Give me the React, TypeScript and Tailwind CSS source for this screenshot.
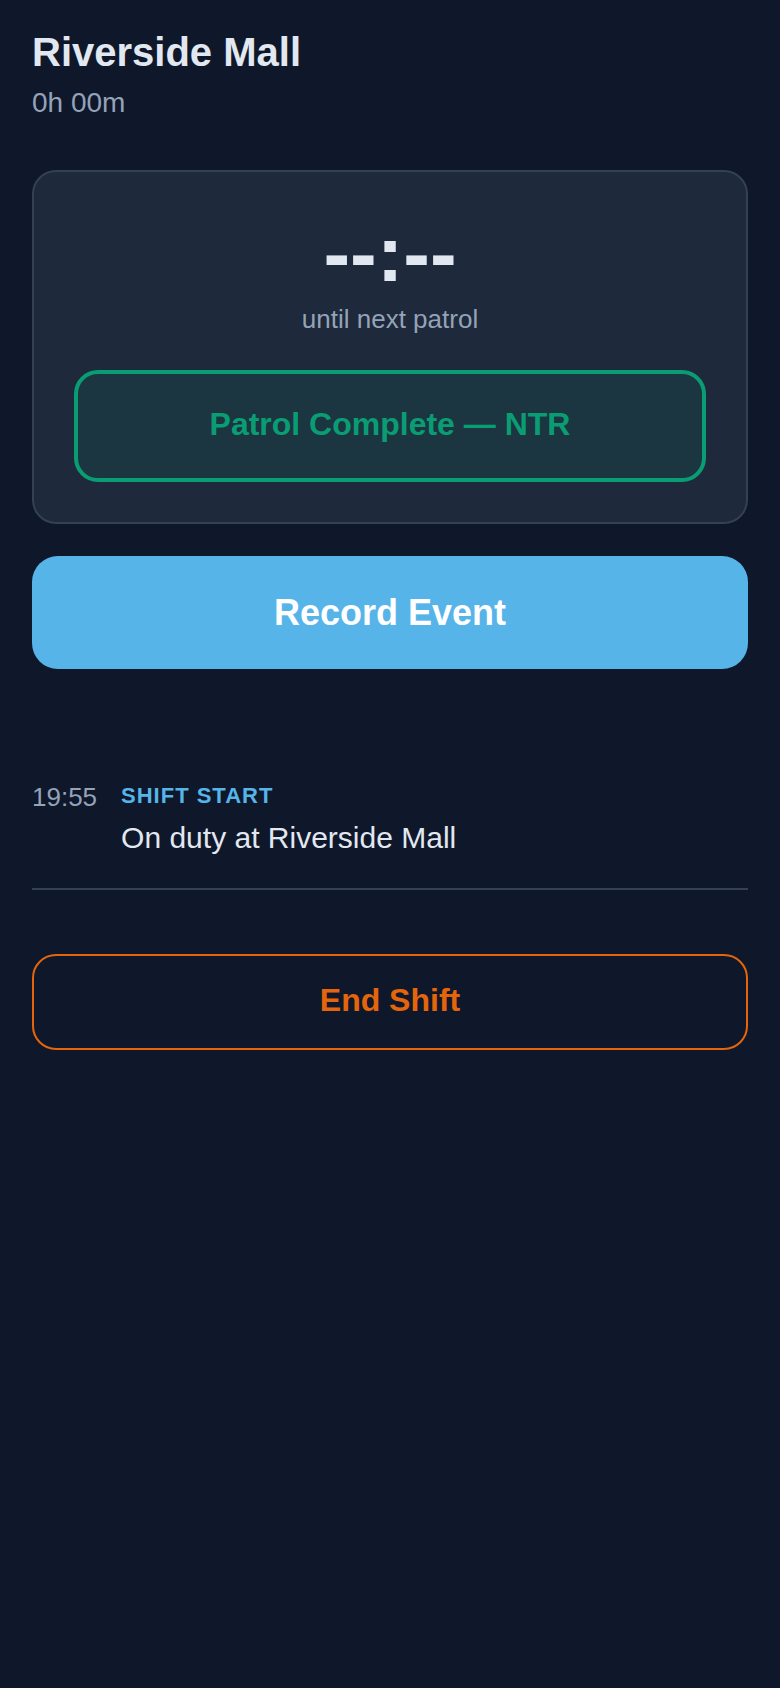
import React from "react";

export default function App() {
  return (
    <div
      className="min-h-[1688px] w-full bg-[#0f172a] px-8 pt-7"
      style={{ fontFamily: '"Liberation Sans", Arial, sans-serif' }}
    >
      <h1 className="text-[40px] font-bold leading-[48px] text-[#e2e8f0]">Riverside Mall</h1>
      <div className="mt-[9px] text-[28px] leading-[36px] text-[#94a3b8]">0h 00m</div>

      <div className="mt-[49px] rounded-[24px] border-2 border-[#334155] bg-[#1e293b] px-10 pt-10 pb-10">
        <div className="text-center text-[80px] font-bold leading-[84px] text-[#e2e8f0]">--:--</div>
        <div className="mt-[7px] text-center text-[26px] leading-[32px] text-[#94a3b8]">until next patrol</div>
        <button className="mt-[35px] flex h-[112px] w-full items-center justify-center rounded-[24px] border-4 border-[#0a9d73] bg-[#1b3641] pb-[4px] text-[32px] font-bold text-[#0a9d73]">
          Patrol Complete — NTR
        </button>
      </div>

      <button className="mt-8 flex h-[113px] w-full items-center justify-center rounded-[26px] bg-[#56b4e9] text-[36px] font-bold text-white">
        Record Event
      </button>

      <div className="mt-[110px] flex gap-6 border-b-2 border-[#334155] pb-[30px]">
        <div className="text-[26px] leading-[36px] text-[#94a3b8]">19:55</div>
        <div className="flex flex-col">
          <div className="text-[22px] font-bold leading-[34px] tracking-[0.045em] text-[#56b4e9]">SHIFT START</div>
          <div className="mt-[5px] text-[30px] leading-[40px] text-[#e2e8f0]">On duty at Riverside Mall</div>
        </div>
      </div>

      <button className="mt-16 flex h-[96px] w-full items-center justify-center rounded-[24px] border-2 border-[#e5650c] bg-transparent pb-[4px] text-[32px] font-bold text-[#e5650c]">
        End Shift
      </button>
    </div>
  );
}
